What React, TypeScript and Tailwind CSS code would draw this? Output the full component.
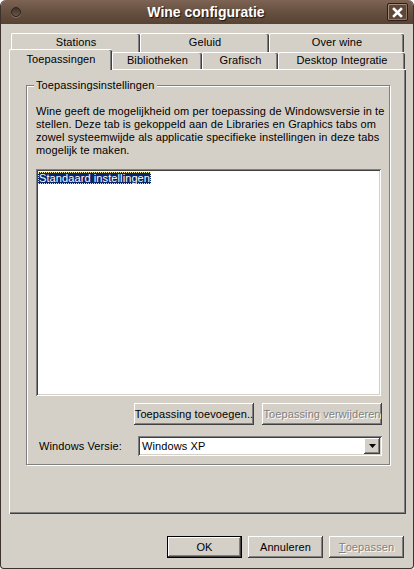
import React from "react";

const raised =
  "shadow-[inset_-1px_-1px_0_#404040,inset_1px_1px_0_#ffffff,inset_-2px_-2px_0_#808080,inset_2px_2px_0_#d4d0c8]";
const sunken =
  "shadow-[inset_1px_1px_0_#808080,inset_-1px_-1px_0_#ffffff,inset_2px_2px_0_#404040,inset_-2px_-2px_0_#d4d0c8]";
const disabledText = "text-[#808080] [text-shadow:1px_1px_0_#ffffff]";

function BackTab({ label, w }: { label: string; w: number }) {
  return (
    <div
      className="h-[19px] shrink-0 border-t border-l border-white rounded-tl-[2px] rounded-tr-[2px] shadow-[inset_-1px_0_0_#404040,inset_-2px_0_0_#808080] flex items-start justify-center pt-[2px] text-[11px] leading-[13px] tracking-[0.1px]"
      style={{ width: w }}
    >
      {label}
    </div>
  );
}

function FrontTab({ label, w, selected }: { label: string; w: number; selected?: boolean }) {
  if (selected) {
    return (
      <div
        className="relative z-10 h-[21px] mt-[-1px] shrink-0 bg-[#d4d0c8] border-t border-l border-white rounded-tl-[2px] rounded-tr-[2px] shadow-[inset_-1px_0_0_#404040,inset_-2px_0_0_#808080] flex items-start justify-center pt-[3px] text-[11px] leading-[13px] tracking-[0.1px]"
        style={{ width: w }}
      >
        {label}
      </div>
    );
  }
  return (
    <div
      className="h-[17px] mt-[2px] shrink-0 bg-[#d4d0c8] border-t border-l border-white rounded-tl-[2px] rounded-tr-[2px] shadow-[inset_-1px_0_0_#404040,inset_-2px_0_0_#808080] flex items-start justify-center pt-[1px] text-[11px] leading-[13px] tracking-[0.1px]"
      style={{ width: w }}
    >
      {label}
    </div>
  );
}

export default function App() {
  return (
    <div
      className="w-[414px] h-[569px] bg-[#d4d0c8] text-black flex flex-col border-l border-r border-b border-[#3e332c] rounded-t-[6px] rounded-b-[4px] overflow-hidden"
      style={{ fontFamily: '"Liberation Sans", Arial, sans-serif' }}
    >
      {/* Title bar */}
      <div className="h-[24px] shrink-0 bg-gradient-to-b from-[#7d6454] via-[#66503f] to-[#574234] flex items-center px-[10px] relative">
        <div className="w-[10px] h-[10px] rounded-full bg-gradient-to-b from-[#3d322b] to-[#6a5748] border border-[#2c231d] shadow-[0_1px_0_#8a7565]" />
        <div className="flex-1 text-center text-white font-bold text-[14px] [text-shadow:1px_1px_1px_#1a120d] pl-[4px]">
          Wine configuratie
        </div>
        <div className="w-[21px] h-[18px] mr-[-5px] border border-[#2a1f18] rounded-[2px] shadow-[inset_1px_1px_0_#a08a7a,inset_-1px_-1px_0_#8f7868] bg-[#5e4738] flex items-center justify-center">
          <svg width="11" height="11" viewBox="0 0 11 11">
            <path d="M2 2 L9 9 M9 2 L2 9" stroke="#ffffff" strokeWidth="2.6" strokeLinecap="square" />
          </svg>
        </div>
      </div>

      {/* Content */}
      <div className="flex flex-col pl-[8px] pr-[7px] pt-[9px]">
        {/* Tabs row 1 */}
        <div className="flex h-[17px] ml-[2px] overflow-visible">
          <BackTab label="Stations" w={129} />
          <BackTab label="Geluid" w={129} />
          <BackTab label="Over wine" w={135} />
        </div>
        {/* Tabs row 2 */}
        <div className="flex h-[19px] relative">
          <FrontTab label="Toepassingen" w={103} selected />
          <FrontTab label="Bibliotheken" w={90} />
          <FrontTab label="Grafisch" w={76} />
          <FrontTab label="Desktop Integratie" w={127} />
        </div>

        {/* Panel */}
        <div className="w-[397px] h-[445px] border-t border-l border-white shadow-[inset_-1px_-1px_0_#404040,inset_-2px_-2px_0_#808080] pt-[15px] pl-[16px]">
          {/* Group box */}
          <div className="relative w-[364px] border border-[#808080] shadow-[inset_1px_1px_0_#ffffff,1px_1px_0_#ffffff] pt-[19px] pl-[9px] pb-[8px]">
            <div className="absolute left-[7px] top-[-7px] px-[2px] bg-[#d4d0c8] text-[11px] leading-[13px] tracking-[0.1px]">
              Toepassingsinstellingen
            </div>
            <div className="text-[11px] leading-[13px] whitespace-nowrap tracking-[0.1px]">
              Wine geeft de mogelijkheid om per toepassing de Windowsversie in te
              <br />
              stellen. Deze tab is gekoppeld aan de Libraries en Graphics tabs om
              <br />
              zowel systeemwijde als applicatie specifieke instellingen in deze tabs
              <br />
              mogelijk te maken.
            </div>

            {/* Listbox */}
            <div className={`mt-[12px] w-[345px] h-[227px] bg-white ${sunken} pt-[3px] pl-[2px] text-[11px] leading-[12px]`}>
              <div className="w-fit bg-[#0a246a] text-white text-[11px] leading-[12px] px-[1px] tracking-[0.1px] outline outline-1 outline-dotted outline-[#f0e68c] -outline-offset-1">
                Standaard instellingen
              </div>
            </div>

            {/* Buttons */}
            <div className="mt-[7px] flex justify-end gap-[8px] w-[346px]">
              <div className={`w-[120px] h-[22px] ${raised} flex items-center justify-center text-[11px] tracking-[0.1px]`}>
                Toepassing toevoegen..
              </div>
              <div className={`w-[120px] h-[22px] ${raised} flex items-center justify-center text-[11px] tracking-[0.1px] ${disabledText}`}>
                Toepassing verwijderen
              </div>
            </div>

            {/* Combo row */}
            <div className="mt-[11px] flex items-center">
              <div className="w-[102px] pl-[3px] text-[11px] tracking-[0.1px]">Windows Versie:</div>
              <div className={`w-[244px] h-[20px] bg-white ${sunken} flex items-center pl-[4px] pr-[2px]`}>
                <div className="flex-1 text-[11px] tracking-[0.1px]">Windows XP</div>
                <div className={`w-[16px] h-[16px] bg-[#d4d0c8] ${raised} flex items-center justify-center`}>
                  <svg width="7" height="4" viewBox="0 0 7 4">
                    <path d="M0 0 H7 L3.5 4 Z" fill="#000000" />
                  </svg>
                </div>
              </div>
            </div>
          </div>
        </div>

        {/* Bottom buttons */}
        <div className="mt-[22px] flex justify-end gap-[6px] pr-[2px]">
          <div className="w-[75px] h-[22px] border border-black">
            <div className={`w-full h-full ${raised} flex items-center justify-center text-[11px]`}>OK</div>
          </div>
          <div className={`w-[75px] h-[22px] ${raised} flex items-center justify-center text-[11px] tracking-[0.1px]`}>Annuleren</div>
          <div className={`w-[75px] h-[22px] ${raised} flex items-center justify-center text-[11px] tracking-[0.1px] ${disabledText}`}>
            <span className="underline">T</span>oepassen
          </div>
        </div>
      </div>
    </div>
  );
}
